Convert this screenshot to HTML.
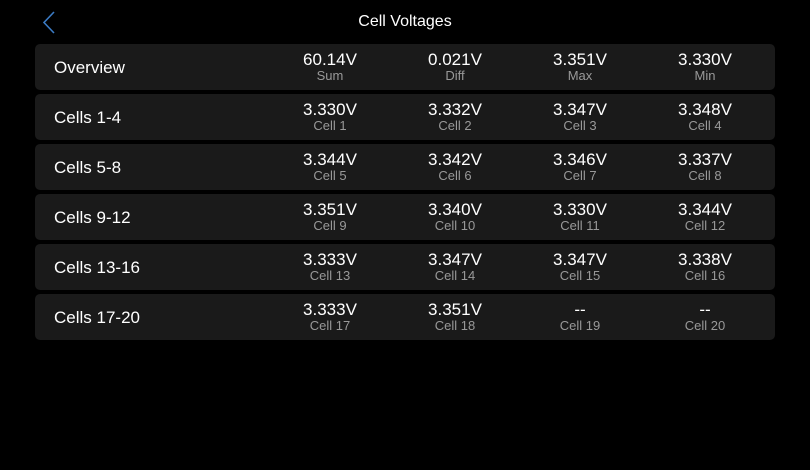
<!DOCTYPE html>
<html><head><style>
body{margin:0;background:#000;width:810px;height:470px;font-family:"Liberation Sans",sans-serif;color:#fff;position:relative;overflow:hidden}
.title{position:absolute;top:13px;left:0;width:810px;text-align:center;font-size:16px}
.row{position:absolute;left:35px;width:740px;height:46px;background:#1a1a1a;border-radius:5px}
.name{position:absolute;left:19px;top:14px;font-size:17px}
.c{position:absolute;width:120px;text-align:center;top:7px}
.v{font-size:17px;line-height:18px}
.l{font-size:13px;color:#999;line-height:14px}
</style></head><body>
<svg style="position:absolute;left:40px;top:11px" width="18" height="24"><path d="M14 1 L4 11.5 L14 22" stroke="#3b7bc4" stroke-width="1.6" fill="none"/></svg>
<div class="title">Cell Voltages</div>
<div class="row" style="top:44px"><div class="name">Overview</div>
<div class="c" style="left:235px"><div class="v">60.14V</div><div class="l">Sum</div></div>
<div class="c" style="left:360px"><div class="v">0.021V</div><div class="l">Diff</div></div>
<div class="c" style="left:485px"><div class="v">3.351V</div><div class="l">Max</div></div>
<div class="c" style="left:610px"><div class="v">3.330V</div><div class="l">Min</div></div></div>
<div class="row" style="top:94px"><div class="name">Cells 1-4</div>
<div class="c" style="left:235px"><div class="v">3.330V</div><div class="l">Cell 1</div></div>
<div class="c" style="left:360px"><div class="v">3.332V</div><div class="l">Cell 2</div></div>
<div class="c" style="left:485px"><div class="v">3.347V</div><div class="l">Cell 3</div></div>
<div class="c" style="left:610px"><div class="v">3.348V</div><div class="l">Cell 4</div></div></div>
<div class="row" style="top:144px"><div class="name">Cells 5-8</div>
<div class="c" style="left:235px"><div class="v">3.344V</div><div class="l">Cell 5</div></div>
<div class="c" style="left:360px"><div class="v">3.342V</div><div class="l">Cell 6</div></div>
<div class="c" style="left:485px"><div class="v">3.346V</div><div class="l">Cell 7</div></div>
<div class="c" style="left:610px"><div class="v">3.337V</div><div class="l">Cell 8</div></div></div>
<div class="row" style="top:194px"><div class="name">Cells 9-12</div>
<div class="c" style="left:235px"><div class="v">3.351V</div><div class="l">Cell 9</div></div>
<div class="c" style="left:360px"><div class="v">3.340V</div><div class="l">Cell 10</div></div>
<div class="c" style="left:485px"><div class="v">3.330V</div><div class="l">Cell 11</div></div>
<div class="c" style="left:610px"><div class="v">3.344V</div><div class="l">Cell 12</div></div></div>
<div class="row" style="top:244px"><div class="name">Cells 13-16</div>
<div class="c" style="left:235px"><div class="v">3.333V</div><div class="l">Cell 13</div></div>
<div class="c" style="left:360px"><div class="v">3.347V</div><div class="l">Cell 14</div></div>
<div class="c" style="left:485px"><div class="v">3.347V</div><div class="l">Cell 15</div></div>
<div class="c" style="left:610px"><div class="v">3.338V</div><div class="l">Cell 16</div></div></div>
<div class="row" style="top:294px"><div class="name">Cells 17-20</div>
<div class="c" style="left:235px"><div class="v">3.333V</div><div class="l">Cell 17</div></div>
<div class="c" style="left:360px"><div class="v">3.351V</div><div class="l">Cell 18</div></div>
<div class="c" style="left:485px"><div class="v">--</div><div class="l">Cell 19</div></div>
<div class="c" style="left:610px"><div class="v">--</div><div class="l">Cell 20</div></div></div>
</body></html>
